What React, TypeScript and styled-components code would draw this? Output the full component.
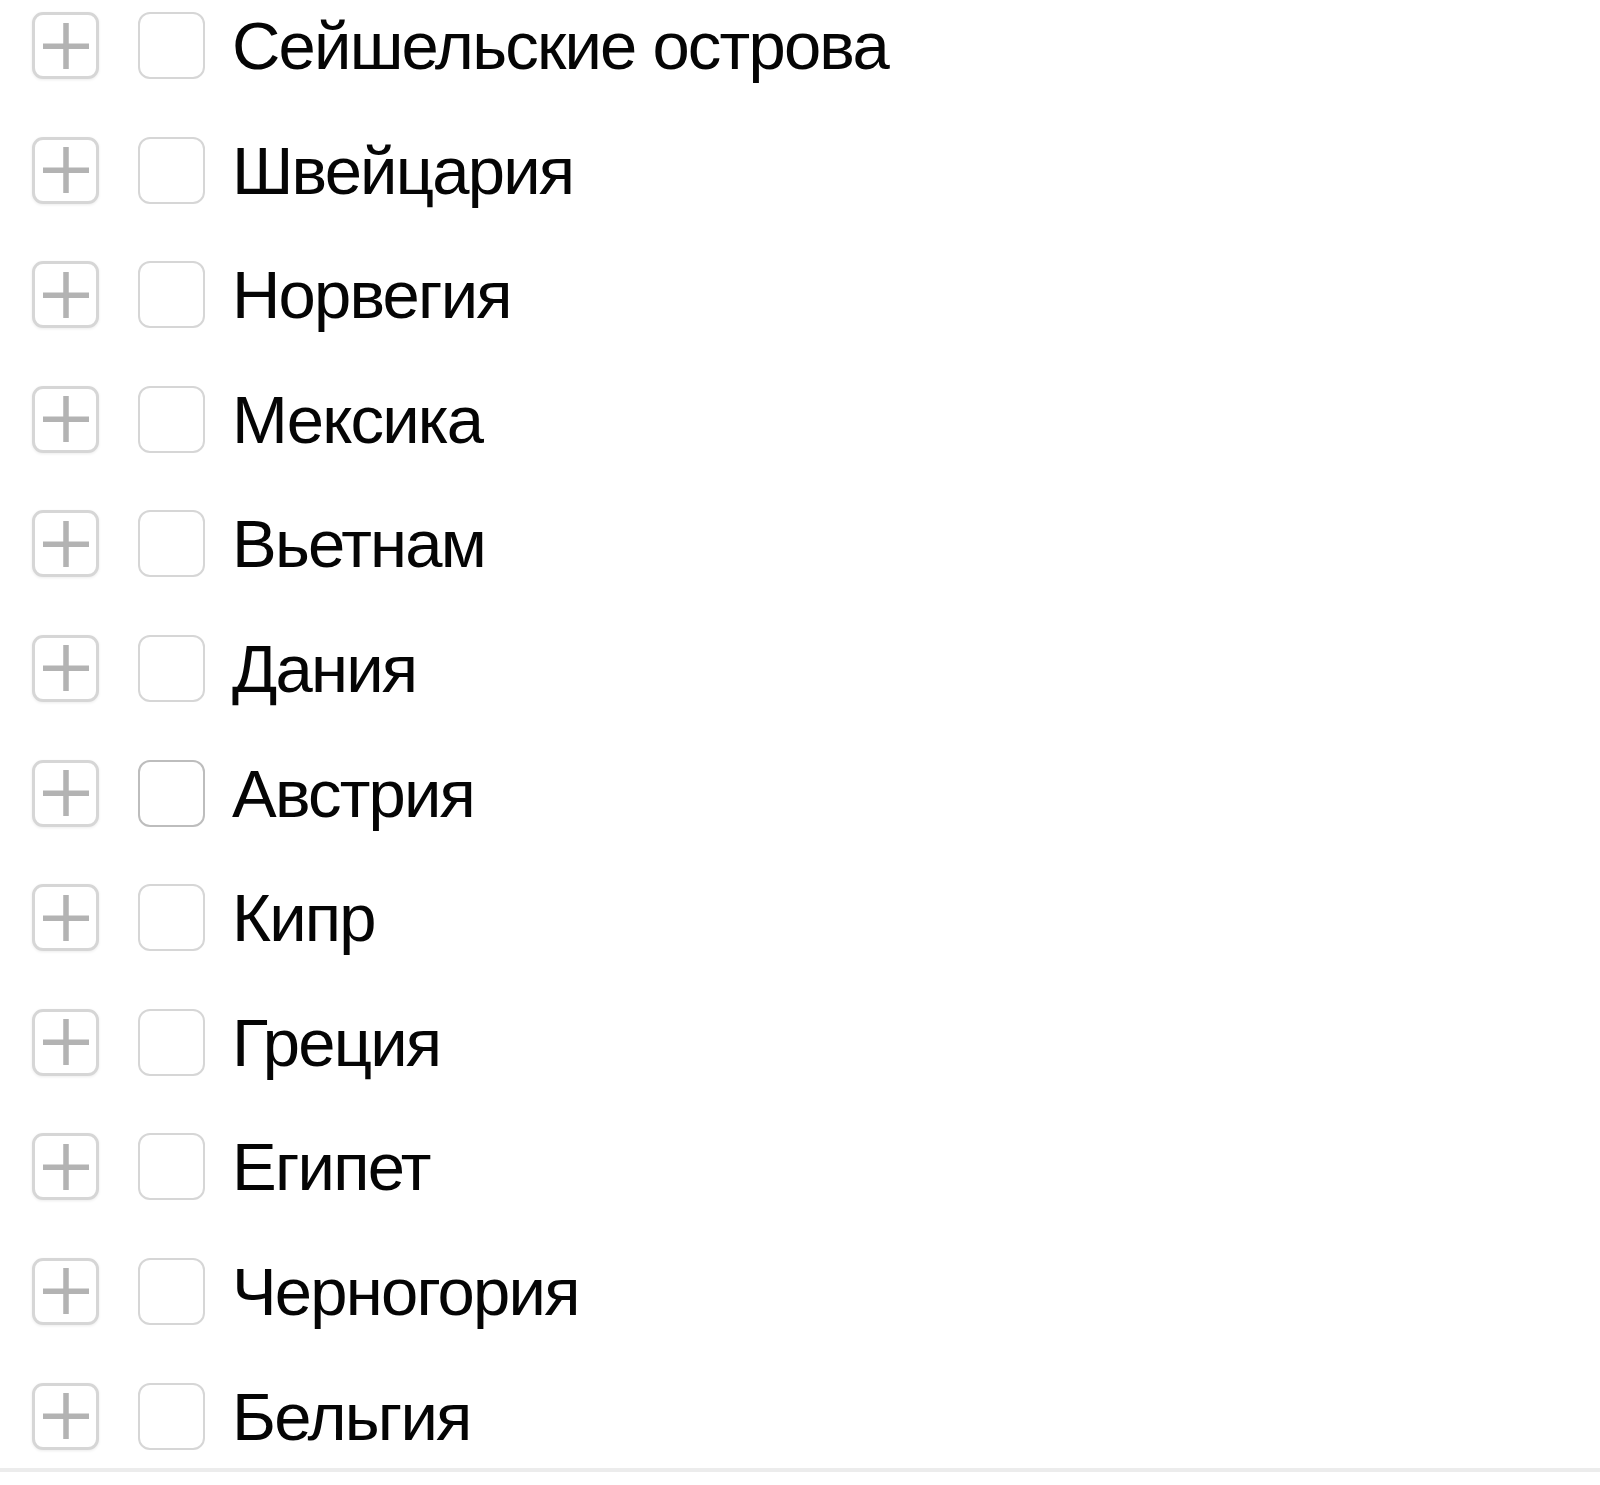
import React from 'react';
import styled, { createGlobalStyle } from 'styled-components';

const GlobalStyle = createGlobalStyle`
  html, body {
    margin: 0;
    padding: 0;
    background: #ffffff;
  }
  body {
    font-family: "Liberation Sans", Arial, sans-serif;
    color: #000;
  }
`;

const Page = styled.div`
  width: 1600px;
  overflow: hidden;
`;

const List = styled.ul`
  list-style: none;
  margin: 0;
  padding: 12px 0 0 32px;
  display: flex;
  flex-direction: column;
  gap: 57.6px;
`;

const Row = styled.li`
  display: flex;
  align-items: center;
  height: 67px;
`;

const ExpandButton = styled.button`
  box-sizing: border-box;
  width: 67px;
  height: 67px;
  padding: 0;
  margin: 0 39px 0 0;
  border: 3px solid #d6d6d6;
  border-radius: 11px;
  background: #fff;
  box-shadow: 0 1px 3px rgba(0, 0, 0, 0.08);
  display: flex;
  align-items: center;
  justify-content: center;
  cursor: pointer;
`;

const Checkbox = styled.span`
  box-sizing: border-box;
  width: 67px;
  height: 67px;
  margin-right: 27px;
  border: 2px solid ${({ $dark }: { $dark?: boolean }) => ($dark ? '#bdbdbd' : '#d6d6d6')};
  border-radius: 12px;
  background: #fff;
  flex-shrink: 0;
`;

const Label = styled.span`
  font-size: 67px;
  line-height: 1;
  letter-spacing: -1.8px;
  white-space: nowrap;
  color: #050505;
`;

const Divider = styled.div`
  height: 4px;
  margin-top: 18px;
  background: #ececec;
`;

const PlusIcon = () => (
  <svg width="46" height="46" viewBox="0 0 46 46">
    <rect x="0" y="20.5" width="46" height="5.5" fill="#b3b3b3" />
    <rect x="20.25" y="0" width="5.5" height="46" fill="#b3b3b3" />
  </svg>
);

const countries = [
  'Сейшельские острова',
  'Швейцария',
  'Норвегия',
  'Мексика',
  'Вьетнам',
  'Дания',
  'Австрия',
  'Кипр',
  'Греция',
  'Египет',
  'Черногория',
  'Бельгия',
];

const App: React.FC = () => (
  <Page>
    <GlobalStyle />
    <List>
      {countries.map((name) => (
        <Row key={name}>
          <ExpandButton aria-label="Развернуть">
            <PlusIcon />
          </ExpandButton>
          <Checkbox $dark={name === 'Австрия'} />
          <Label>{name}</Label>
        </Row>
      ))}
    </List>
    <Divider />
  </Page>
);

export default App;
